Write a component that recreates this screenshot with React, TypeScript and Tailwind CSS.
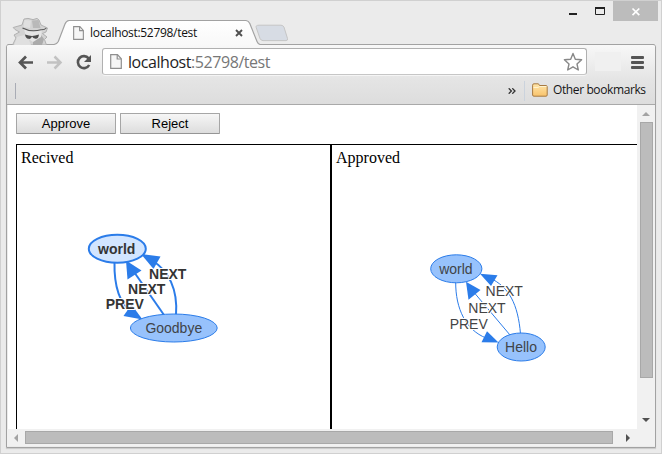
import type { ReactNode } from 'react';

const PageIcon = ({ className }: { className: string }) => (
  <svg viewBox="0 0 12 15" className={className} fill="none" preserveAspectRatio="none">
    <path d="M.7 .7H7.5L11.3 4.8V14.3H.7Z" fill="#f6f6f6" stroke="#8f8f8f" strokeWidth="1.2" />
    <path d="M7.2 1V5H11" stroke="#8f8f8f" strokeWidth="1.2" />
  </svg>
);

const Spy = () => (
  <svg width="38" height="28" viewBox="12 16 38 28" className="ml-[11px] shrink-0">
    <path d="M12.5 44L16 37L14 34L19.5 31L15 28.5L13.2 26.5L22 24L24 18L28 17.4L33 18.6L37 17.4L39 19L41 24L47.5 27L46 31L42.5 32.5L47 36L44.5 38.5L46.5 44Z" fill="#d3d3d3" stroke="#ababab" strokeWidth=".9" strokeLinejoin="round" />
    <path d="M24.5 19L31 19.6L30 27L23.5 26ZM17 36L24 34L29 39L31 44H14Z" fill="#e0e0e0" />
    <path d="M33 39L41 34L44 38L42 44H33Z" fill="#ababab" />
    <path d="M32 19.5L38.5 19L40.5 27L33 27Z" fill="#b9b9b9" />
    <path d="M24 28Q32 33 42 28L41 36L33 41L26 36Z" fill="#e6e6e6" />
    <path d="M22.5 27Q31 31.5 41 28.8Q44.5 29 46.3 27" fill="none" stroke="#555" strokeWidth="1.1" />
    <path d="M25 33.5Q29 34.5 32 35Q35 34.5 39 33.5Q38.5 38 35.5 37.7Q33 37.5 32 35.5Q31 38.5 28.5 37.8Q25.5 37.5 25 33.5Z" fill="#4c4c4c" />
  </svg>
);

const Tab = () => (
  <div className="relative h-[25px] w-[206px] shrink-0">
    <svg width="206" height="25" viewBox="54 20 206 25" className="absolute -top-px left-0 overflow-visible">
      <defs>
        <linearGradient id="tab" x1="0" y1="0" x2="0" y2="1">
          <stop offset="0" stopColor="#fff" />
          <stop offset="1" stopColor="#f8f8f8" />
        </linearGradient>
      </defs>
      <path d="M54 46V44.5Q57 44 58.3 41.5L65 24Q66.2 20.8 69 20.5H246Q248.5 20.8 249.8 23.5L257 41.5Q258 44 260 44.5V46Z" fill="url(#tab)" />
      <path d="M54 44.5Q57 44 58.3 41.5L65 24Q66.2 20.8 69 20.5H246Q248.5 20.8 249.8 23.5L257 41.5Q258 44 260 44.5" fill="none" stroke="#a2a2a2" strokeWidth="1.2" />
    </svg>
    <div className="relative -mt-px flex h-full items-center pl-[19px]">
      <PageIcon className="h-[14px] w-[11px]" />
      <span className="ml-[6px] w-[140px] font-['Open_Sans',sans-serif] text-[12px] leading-[16px] tracking-[-0.31px] text-[#111]">localhost:52798/test</span>
      <svg width="8" height="8" viewBox="0 0 8 8" className="ml-[5px] shrink-0">
        <path d="M1 1L7 7M7 1L1 7" stroke="#505050" strokeWidth="1.9" />
      </svg>
    </div>
  </div>
);

const TitleBar = () => (
  <div className="flex h-[44px] items-start">
    <div className="flex h-[44px] w-full items-end">
      <Spy />
      <div className="-mb-[1px] ml-[4px] flex items-start"><Tab />
        <svg width="34" height="18" viewBox="254 24 34 18" className="-ml-[6px] mt-[3px] shrink-0">
          <path d="M259 25.2H281Q283 25.2 284 27.2L287.5 38.5Q288 40.6 286 40.6H263Q261 40.6 260 38.5L256.2 27.5Q255.5 25.2 259 25.2Z" fill="#d7dce4" stroke="#c5c5c5" />
        </svg>
      </div>
    </div>
    <svg width="90" height="20" viewBox="568 1 90 20" className="mr-[3px] shrink-0">
      <path d="M613 1H658V21H613Z" fill="#bcbcbc" />
      <path d="M569 13H577V15H569Z" fill="#222" />
      <path d="M595.5 8V14.5H604.5V8" fill="none" stroke="#222" />
      <path d="M595 7H605V9H595Z" fill="#222" />
      <path d="M632.5 8.5L639.3 15.2M639.3 8.5L632.5 15.2" stroke="#fff" strokeWidth="1.7" />
    </svg>
  </div>
);

const Toolbar = () => (
  <div className="flex h-[33px] items-center">
    <svg width="76" height="18" viewBox="17 53 76 18" fill="none" className="ml-[10px] shrink-0">
      <path d="M33 62.5H21M26 56.5L20 62.5L26 68.5" stroke="#555" strokeWidth="2.7" />
      <path d="M47 62.5H59M54.5 56.5L60.5 62.5L54.5 68.5" stroke="#c2c2c2" strokeWidth="2.5" />
      <path d="M88.6 58.4A6 6 0 1 0 89.2 65" stroke="#555" strokeWidth="2.6" />
      <path d="M91 55V62H84Z" fill="#555" />
    </svg>
    <div className="ml-[9px] flex h-[27px] w-[485px] shrink-0 items-center rounded-[3px] border border-[#b0b0b0] border-b-[#c6c6c6] bg-white shadow-[0_1px_0_#f5f5f5]">
      <PageIcon className="ml-[7px] h-[15px] w-[12px] shrink-0" />
      <span className="ml-[6px] w-[435px] font-['Open_Sans',sans-serif] text-[16px] leading-[22px] tracking-[-0.44px] text-[#777]"><span className="text-[#1e1e1e]">localhost</span>:52798/test</span>
      <svg width="20" height="20" viewBox="0 0 20 20" className="shrink-0">
        <path d="M10 1.5L12.3 7.3L18.6 7.8L14 12L15.3 18L10 14.8L4.7 18L6 12L1.4 7.8L7.7 7.3Z" fill="#fff" stroke="#888" strokeWidth="1.4" strokeLinejoin="round" />
      </svg>
    </div>
    <div className="ml-[8px] h-[19px] w-[26px] bg-[#f0f0f0]" />
    <div className="ml-[10px] mt-px flex flex-col gap-[2px]">
      <i className="h-[3px] w-[13px] rounded-[1px] bg-[#555]" />
      <i className="h-[3px] w-[13px] rounded-[1px] bg-[#555]" />
      <i className="h-[3px] w-[13px] rounded-[1px] bg-[#555]" />
    </div>
  </div>
);

const Bookmarks = () => (
  <div className="flex h-[26px] items-center font-['Open_Sans',sans-serif] text-[12px] text-[#151515]">
    <div className="ml-[8px] h-[16px] w-px bg-[#a9acb5]" />
    <svg width="8" height="6" viewBox="0 0 8 6" className="ml-auto shrink-0" fill="none">
      <path d="M.7 .3L3.4 3L.7 5.7M4.3 .3L7 3L4.3 5.7" stroke="#333" strokeWidth="1.3" />
    </svg>
    <div className="ml-[8px] h-[20px] w-px bg-[#cbd3dd]" />
    <svg width="16" height="14" viewBox="0 0 16 14" className="mb-[2px] ml-[7px] shrink-0">
      <defs><linearGradient id="folder" x1="0" y1="0" x2="0" y2="1"><stop stopColor="#ffe6aa" /><stop offset="1" stopColor="#f8c36c" /></linearGradient></defs>
      <path d="M.6 12V2.2Q.6 .8 2 .8H6Q7 .8 7.5 2.5H14Q15.2 2.5 15.2 4V12Q15.2 13.2 14 13.2H2Q.6 13.2 .6 12Z" fill="url(#folder)" stroke="#a77a42" />
      <path d="M1.5 4.5H6L7.5 3.5H14.5" fill="none" stroke="#fff3cf" />
    </svg>
    <span className="mb-[2px] ml-[5px] w-[102px] whitespace-nowrap leading-[16px] tracking-[-0.39px]">Other bookmarks</span>
  </div>
);

const Button = ({ children }: { children: ReactNode }) => (
  <button className="h-[21px] w-[100px] rounded-[1px] border border-[#a6a6a6] border-b-[#959595] bg-linear-to-b from-[#f6f6f6] to-[#dddddd] text-center font-['Liberation_Sans',Arial,sans-serif] text-[13px] leading-[18px] text-black">{children}</button>
);

const Label = ({ x, y, bold, children }: { x: number; y: number; bold?: boolean; children: string }) => (
  <text x={x} y={y} textAnchor="middle" fontSize="14" fontWeight={bold ? 700 : 400} fill={bold ? '#343434' : '#444'} stroke="#fff" strokeWidth="2" paintOrder="stroke" strokeLinejoin="round">{children}</text>
);

const NodeLabel = ({ x, y, bold, children }: { x: number; y: number; bold?: boolean; children: string }) => (
  <text x={x} y={y} textAnchor="middle" fontSize="14" fontWeight={bold ? 700 : 400} fill={bold ? '#343434' : '#404448'}>{children}</text>
);

const ReceivedGraph = () => (
  <svg width="313" height="256" viewBox="17 173 313 256" className="block font-['Liberation_Sans',Arial,sans-serif]">
    <g fill="none" stroke="#2b7ce9" strokeWidth="2">
      <path d="M114.5 262C114 284 119 303 132 313" />
      <path d="M164 315L132 269" />
      <path d="M176 315C178 290 169 270 151 260" />
    </g>
    <g fill="#2b7ce9">
      <path d="M142.5 319.5L123.5 316L131.5 304.5Z" />
      <path d="M126 260.5L127.5 279.5L141.5 270.5Z" />
      <path d="M141 254L160.5 256.5L153.5 269Z" />
    </g>
    <ellipse cx="117.3" cy="248.7" rx="28.5" ry="14" fill="#d2e5ff" stroke="#2b7ce9" strokeWidth="2" />
    <ellipse cx="173.8" cy="328" rx="43.4" ry="14" fill="#97c2fc" stroke="#2b7ce9" />
    <Label x={167.7} y={279} bold>NEXT</Label>
    <Label x={146.7} y={294} bold>NEXT</Label>
    <Label x={124.8} y={309} bold>PREV</Label>
    <NodeLabel x={116.7} y={254} bold>world</NodeLabel>
    <NodeLabel x={173.8} y={333}>Goodbye</NodeLabel>
  </svg>
);

const ApprovedGraph = () => (
  <svg width="313" height="256" viewBox="332 173 313 256" className="block font-['Liberation_Sans',Arial,sans-serif]">
    <g fill="none" stroke="#2b7ce9">
      <path d="M455.7 282C455.5 309 466 330 486 338" />
      <path d="M510 335L472 290" />
      <path d="M520.5 334C518 304 509 287 490 278" />
    </g>
    <g fill="#2b7ce9">
      <path d="M498.5 342.5L481.5 342.3L487 331.3Z" />
      <path d="M466 281.7L468.5 299.8L480.5 290Z" />
      <path d="M480 273.7L497.5 275.3L491 286Z" />
    </g>
    <ellipse cx="456.3" cy="268.8" rx="25.6" ry="14" fill="#97c2fc" stroke="#2b7ce9" />
    <ellipse cx="521.2" cy="347" rx="24" ry="14" fill="#97c2fc" stroke="#2b7ce9" />
    <Label x={504.2} y={296}>NEXT</Label>
    <Label x={487} y={313}>NEXT</Label>
    <Label x={468.7} y={329}>PREV</Label>
    <NodeLabel x={455.9} y={274}>world</NodeLabel>
    <NodeLabel x={521} y={352}>Hello</NodeLabel>
  </svg>
);

const Panel = ({ title, children }: { title: string; children: ReactNode }) => (
  <section className="h-[300px] w-[315px] shrink-0 border border-black">
    <h2 className="h-[28px] pl-[4px] pt-[4px] font-['Liberation_Serif',serif] text-[16px] leading-[18px] text-black">{title}</h2>
    {children}
  </section>
);

export default function App() {
  return (
    <div className="h-[454px] w-[662px] overflow-hidden border border-[#d0d0d0] bg-[#ebebeb]">
      <TitleBar />
      <div className="-mt-[1px] ml-[5px] h-[404px] w-[650px] rounded-t-[3px] border border-[#a2a2a2] shadow-[0_1px_1px_#c9c9c9]">
        <div className="-mt-[1px] flex h-[61px] flex-col rounded-t-[2px] border-b border-t border-b-[#a9a9a9] border-t-[#a2a2a2] bg-linear-to-b from-[#f8f8f8] via-[#e4e4e4] via-60% to-[#dddddd]">
          <Toolbar />
          <Bookmarks />
        </div>
        <div className="flex h-[324px] pl-[1px]">
          <main className="w-[629px] shrink-0 overflow-hidden bg-white pl-[8px] pt-[8px]">
            <div className="flex gap-[4px]">
              <Button>Approve</Button>
              <Button>Reject</Button>
            </div>
            <div className="mt-[10px] flex">
              <Panel title="Recived"><ReceivedGraph /></Panel>
              <Panel title="Approved"><ApprovedGraph /></Panel>
            </div>
          </main>
          <div className="flex w-[18px] flex-col items-center bg-[#f1f1f1]">
            <svg width="8" height="4" viewBox="0 0 8 4" className="mt-[7px] shrink-0"><path d="M0 4L4 0L8 4Z" fill="#a3a3a3" /></svg>
            <div className="mt-[6px] h-[256px] w-[13px] shrink-0 border border-[#a8a8a8] bg-[#bcbcbc]" />
            <svg width="8" height="4" viewBox="0 0 8 4" className="mt-[40px] shrink-0"><path d="M0 0L4 4L8 0Z" fill="#505050" /></svg>
          </div>
        </div>
        <div className="flex h-[17px] items-center bg-[#f1f1f1] pl-[7px]">
          <svg width="4" height="8" viewBox="0 0 4 8"><path d="M4 0L0 4L4 8Z" fill="#a3a3a3" /></svg>
          <div className="ml-[7px] h-[13px] w-[588px] border border-[#a8a8a8] bg-[#bcbcbc]" />
          <svg width="4" height="8" viewBox="0 0 4 8" className="ml-[13px]"><path d="M0 0L4 4L0 8Z" fill="#505050" /></svg>
        </div>
      </div>
    </div>
  );
}
